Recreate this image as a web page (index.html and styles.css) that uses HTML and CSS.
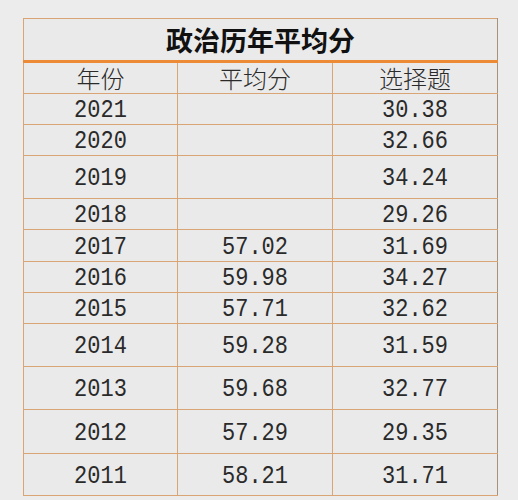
FILE: index.html
```html
<!DOCTYPE html>
<html lang="zh">
<head>
    <meta charset="UTF-8">
    <meta name="viewport" content="width=device-width, initial-scale=1.0">
    <title>政治历年平均分</title>
    <link rel="stylesheet" href="styles.css">
</head>
<body>
    <table class="score-table">
        <colgroup>
            <col class="col-year">
            <col class="col-avg">
            <col class="col-choice">
        </colgroup>
        <tr class="title-row">
            <th colspan="3">政治历年平均分</th>
        </tr>
        <tr class="head-row">
            <td>年份</td>
            <td>平均分</td>
            <td>选择题</td>
        </tr>
        <tr class="row-s"><td><span>2021</span></td><td></td><td><span>30.38</span></td></tr>
        <tr class="row-s"><td><span>2020</span></td><td></td><td><span>32.66</span></td></tr>
        <tr class="row-l"><td><span>2019</span></td><td></td><td><span>34.24</span></td></tr>
        <tr class="row-s"><td><span>2018</span></td><td></td><td><span>29.26</span></td></tr>
        <tr class="row-m"><td><span>2017</span></td><td><span>57.02</span></td><td><span>31.69</span></td></tr>
        <tr class="row-s"><td><span>2016</span></td><td><span>59.98</span></td><td><span>34.27</span></td></tr>
        <tr class="row-s"><td><span>2015</span></td><td><span>57.71</span></td><td><span>32.62</span></td></tr>
        <tr class="row-l"><td><span>2014</span></td><td><span>59.28</span></td><td><span>31.59</span></td></tr>
        <tr class="row-l"><td><span>2013</span></td><td><span>59.68</span></td><td><span>32.77</span></td></tr>
        <tr class="row-xl"><td><span>2012</span></td><td><span>57.29</span></td><td><span>29.35</span></td></tr>
        <tr class="row-l2"><td><span>2011</span></td><td><span>58.21</span></td><td><span>31.71</span></td></tr>
    </table>
</body>
</html>
```

FILE: styles.css
```css
body {
    margin: 0;
    padding: 18px 0 0 23px;
    background-color: #ececec;
    font-family: "Liberation Mono", "DejaVu Sans Mono", monospace;
    color: #2a2a2a;
}
.score-table {
    border-collapse: collapse;
    table-layout: fixed;
    width: 474px;
    background-color: #eaeaea;
    border: 1px solid #a8927c;
}
.col-year {
    width: 154px;
}
.col-avg {
    width: 155px;
}
.col-choice {
    width: 165px;
}
.score-table td,
.score-table th {
    border: 1px solid #d9a574;
    padding: 4px 0 0 0;
    text-align: center;
    font-size: 22px;
    line-height: 1;
}
.score-table td span {
    display: inline-block;
    transform: scaleY(1.2);
}
.score-table td:last-child,
.score-table th {
    border-right-color: #a8927c;
}
.title-row {
    height: 43px;
}
.title-row th {
    border-bottom: 3px solid #ec8a35;
    font-family: "Noto Sans CJK SC", sans-serif;
    font-weight: bold;
    font-size: 27px;
    color: #111;
    padding: 0;
}
.head-row {
    height: 32px;
}
.head-row td {
    font-family: "Noto Sans CJK SC", sans-serif;
    font-weight: 300;
    font-size: 24px;
    padding: 0;
}
.row-s {
    height: 31px;
}
.row-m {
    height: 32px;
}
.row-l {
    height: 43px;
}
.row-xl {
    height: 44px;
}
.row-l2 {
    height: 42px;
}
```
